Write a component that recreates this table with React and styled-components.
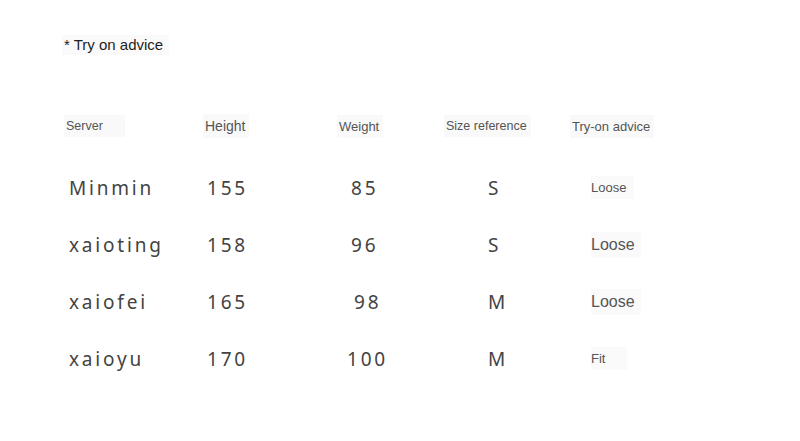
import React from "react";
import styled, { createGlobalStyle } from "styled-components";

const Global = createGlobalStyle`
  html, body { margin: 0; padding: 0; background: #ffffff; }
  body { width: 800px; height: 441px; overflow: hidden; }
`;

const Page = styled.div`
  width: 800px;
  height: 441px;
  box-sizing: border-box;
  padding: 35px 0 0 62px;
  display: flex;
  flex-direction: column;
  background: #fff;
`;

const Title = styled.div`
  align-self: flex-start;
  font-family: "Liberation Sans", Arial, sans-serif;
  font-size: 15px;
  line-height: 20px;
  color: #1f1f1f;
  padding: 0 6px 0 2px;
  background: #fafafa;
`;

const Grid = styled.div`
  display: grid;
  grid-template-columns: 141px 134px 107px 126px 1fr;
`;

const HeaderRow = styled(Grid)`
  margin-top: 58px;
  height: 26px;
`;

const Body = styled(Grid)`
  margin-top: 20px;
  grid-auto-rows: 57px;
`;

const HeadCell = styled.div`
  display: flex;
  align-items: center;
  padding-left: ${(p) => p.$pl || 0}px;
`;

const HeadText = styled.span`
  font-family: "Liberation Sans", Arial, sans-serif;
  font-size: ${(p) => p.$size}px;
  color: #555;
  background: #f9f9f9;
  padding: 4px ${(p) => p.$pr || 4}px 4px 2px;
`;

const Cell = styled.div`
  display: flex;
  align-items: center;
  padding-left: ${(p) => p.$pl || 0}px;
`;

const DataText = styled.span`
  font-family: "Noto Sans", "Open Sans", sans-serif;
  font-size: 19px;
  letter-spacing: 2.8px;
  color: #434343;
`;

const AdviceText = styled.span`
  font-family: "Liberation Sans", Arial, sans-serif;
  font-size: ${(p) => p.$size}px;
  color: #555;
  background: #fafafa;
  padding: 4px ${(p) => p.$pr || 6}px 4px 0;
`;

const rows = [
  { name: "Minmin", h: "155", w: "85", wpl: 14, s: "S", a: "Loose", as: 13, ap: 8 },
  { name: "xaioting", h: "158", w: "96", wpl: 14, s: "S", a: "Loose", as: 16, ap: 0 },
  { name: "xaiofei", h: "165", w: "98", wpl: 17, s: "M", a: "Loose", as: 16, ap: 0 },
  { name: "xaioyu", h: "170", w: "100", wpl: 10, s: "M", a: "Fit", as: 13, ap: 22 },
];

export default function App() {
  return (
    <>
      <Global />
      <Page>
        <Title>* Try on advice</Title>
        <HeaderRow>
          <HeadCell $pl={2}><HeadText $size={12.5} $pr={22}>Server</HeadText></HeadCell>
          <HeadCell><HeadText $size={14}>Height</HeadText></HeadCell>
          <HeadCell><HeadText $size={13}>Weight</HeadText></HeadCell>
          <HeadCell><HeadText $size={12.5}>Size reference</HeadText></HeadCell>
          <HeadCell><HeadText $size={13}>Try-on advice</HeadText></HeadCell>
        </HeaderRow>
        <Body>
          {rows.map((r) => (
            <React.Fragment key={r.name}>
              <Cell $pl={7}><DataText>{r.name}</DataText></Cell>
              <Cell $pl={4}><DataText>{r.h}</DataText></Cell>
              <Cell $pl={r.wpl}><DataText>{r.w}</DataText></Cell>
              <Cell $pl={44}><DataText>{r.s}</DataText></Cell>
              <Cell $pl={21}><AdviceText $size={r.as} $pr={r.ap}>{r.a}</AdviceText></Cell>
            </React.Fragment>
          ))}
        </Body>
      </Page>
    </>
  );
}
